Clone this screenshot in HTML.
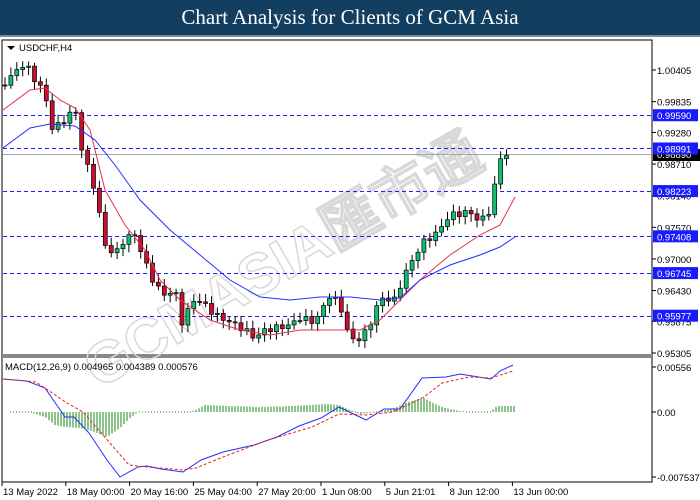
<!DOCTYPE html><html><head><meta charset="utf-8"><style>
body{margin:0;width:700px;height:500px;overflow:hidden;background:#fff;font-family:"Liberation Sans",sans-serif}
#h{position:absolute;left:0;top:0;width:700px;height:35px;background:#123f60;color:#fff;font:21px "Liberation Serif",serif;text-align:center;line-height:35px;border-bottom:2px solid #7d8a96}
svg{position:absolute;left:0;top:0}
</style></head><body>
<div id="h">Chart Analysis for Clients of GCM Asia</div>
<svg id="s" width="700" height="500" font-family="Liberation Sans" font-size="9.5"></svg>
<script>
const s=document.getElementById('s');let o='';
o+='<rect x="2" y="40" width="650" height="442" fill="none" stroke="#000"/>';
o+='<rect x="2" y="354" width="650" height="4" fill="#888"/>';
o+='<path d="M7 46h8l-4 4z" fill="#000"/><text x="19" y="51">USDCHF,H4</text>';
const P=p=>70+(1.00405-p)/0.051*283;
const L=[[0.9959,'0.99590'],[0.98991,'0.98991'],[0.98223,'0.98223'],[0.97408,'0.97408'],[0.96745,'0.96745'],[0.95977,'0.95977']];
o+='<text x="60" y="255" transform="rotate(-30 330 250)" font-size="58" font-weight="bold" fill="none" stroke="#d8d8d8" stroke-width="1.5">GCMASIA匯市通</text>';
L.forEach(l=>{const y=Math.round(P(l[0]))+.5;o+=`<line x1="3" x2="652" y1="${y}" y2="${y}" stroke="#2020ff" stroke-dasharray="4,3"/>`;});
o+='<line x1="3" x2="652" y1="154.5" y2="154.5" stroke="#9aa"/>';
['1.00405','0.99835','0.99280','0.98710','0.98140','0.97570','0.97000','0.96430','0.95875','0.95305'].forEach(t=>{const y=P(+t);o+=`<line x1="652" x2="656" y1="${y}" y2="${y}" stroke="#000"/><text x="657" y="${y+4}">${t}</text>`;});
o+='<rect x="653" y="149" width="47" height="12" fill="#000"/><text x="657" y="158" fill="#fff">0.98890</text>';
L.forEach(l=>{const y=P(l[0]);o+=`<rect x="653" y="${y-6}" width="45" height="12" fill="#1a1aff"/><text x="657" y="${y+4}" fill="#fff">${l[1]}</text>`;});
function interp(k,x){for(let i=0;i<k.length-1;i++){if(x>=k[i][0]&&x<=k[i+1][0]){const t=(x-k[i][0])/(k[i+1][0]-k[i][0]);return k[i][1]+t*(k[i+1][1]-k[i][1]);}}return k[k.length-1][1];}
const pk=[[3,85],[15,72],[25,63],[35,80],[45,92],[50,128],[60,125],[75,108],[82,150],[95,190],[105,245],[115,255],[125,238],[135,235],[145,262],[155,285],[165,295],[175,290],[182,322],[195,298],[205,305],[215,315],[230,322],[245,330],[255,338],[265,330],[275,328],[290,325],[300,318],[315,322],[330,295],[340,305],[350,340],[362,338],[372,320],[380,298],[395,300],[403,278],[415,255],[425,240],[435,235],[450,215],[470,212],[480,222],[490,210],[495,185],[500,158],[512,152]];
let prev=interp(pk,3);
for(let x=5;x<=512;x+=5.9){const c=interp(pk,x)+Math.sin(x*1.7)*3;const op=prev;const hi=Math.min(op,c)-3-Math.abs(Math.sin(x))*5,lo=Math.max(op,c)+3+Math.abs(Math.cos(x))*5;
const up=c<op;o+=`<line x1="${x}" x2="${x}" y1="${hi}" y2="${lo}" stroke="#000"/><rect x="${x-2}" y="${Math.min(op,c)}" width="4" height="${Math.max(1,Math.abs(c-op))}" fill="${up?'#10c070':'#c8102e'}" stroke="#000" stroke-width=".7"/>`;prev=c;}
const pl=(k,c,d)=>'<polyline fill="none" stroke="'+c+'" '+(d||'')+' points="'+k.map(p=>p.join(',')).join(' ')+'"/>';
o+=pl([[3,110],[30,90],[45,88],[60,100],[75,108],[90,130],[105,190],[125,225],[145,250],[160,280],[180,300],[210,320],[240,330],[270,335],[300,330],[330,330],[360,330],[380,320],[400,300],[420,280],[450,255],[480,235],[500,225],[515,197]],'#e8304a');
o+=pl([[3,148],[30,128],[50,124],[75,126],[95,140],[115,165],[140,200],[170,230],[200,255],[230,280],[260,297],[290,300],[320,297],[350,297],[380,300],[400,298],[420,280],[450,265],[480,255],[500,247],[515,237]],'#2030ff');
o+='<text x="5" y="370">MACD(12,26,9) 0.004965 0.004389 0.000576</text>';
[['0.00556',367],['0.00',412],['-0.007537',477]].forEach(t=>{o+=`<line x1="652" x2="656" y1="${t[1]}" y2="${t[1]}" stroke="#000"/><text x="657" y="${t[1]+4}">${t[0]}</text>`;});
const hk=[[10,0],[30,0],[45,-5],[55,-13],[65,-15],[80,-16],[95,-20],[107,-25],[120,-16],[130,-6],[138,0],[150,0],[175,0],[190,0],[198,3],[205,7],[230,6],[260,5],[290,6],[310,7],[326,8],[339,7],[350,2],[360,-2],[370,-1],[380,1],[395,4],[405,9],[415,12],[424,14],[435,8],[445,4],[460,1],[470,0],[490,0],[497,6],[515,6]];
for(let x=10;x<=515;x+=3){const v=interp(hk,x);if(Math.abs(v)<0.5){o+=`<rect x="${x}" y="411.5" width="1" height="1" fill="#1a8a1a"/>`;continue;}o+=`<line x1="${x}" x2="${x}" y1="412" y2="${412-v}" stroke="#1a8a1a"/>`;}
o+=pl([[3,379],[27,381],[45,388],[65,417],[74,417],[89,433],[107,460],[120,477],[138,467],[147,466],[161,469],[183,472],[201,460],[223,452],[254,445],[277,437],[299,426],[321,418],[339,407],[366,420],[384,409],[400,409],[422,378],[446,377],[460,374],[491,379],[500,371],[513,365]],'#2030ff');
o+=pl([[3,379],[36,382],[67,403],[83,412],[103,435],[129,465],[147,467],[183,470],[196,468],[223,457],[268,440],[312,427],[339,414],[366,415],[393,412],[424,397],[442,383],[469,377],[491,378],[513,371]],'#e82020','stroke-dasharray="3,2"');
['13 May 2022','18 May 00:00','20 May 16:00','25 May 04:00','27 May 20:00','1 Jun 08:00','5 Jun 21:01','8 Jun 12:00','13 Jun 00:00'].forEach((t,i)=>{const x=2+i*63.8;o+=`<line x1="${x}" x2="${x}" y1="482" y2="486" stroke="#000"/><text x="${x+1}" y="495">${t}</text>`;});
s.innerHTML=o;
</script></body></html>
